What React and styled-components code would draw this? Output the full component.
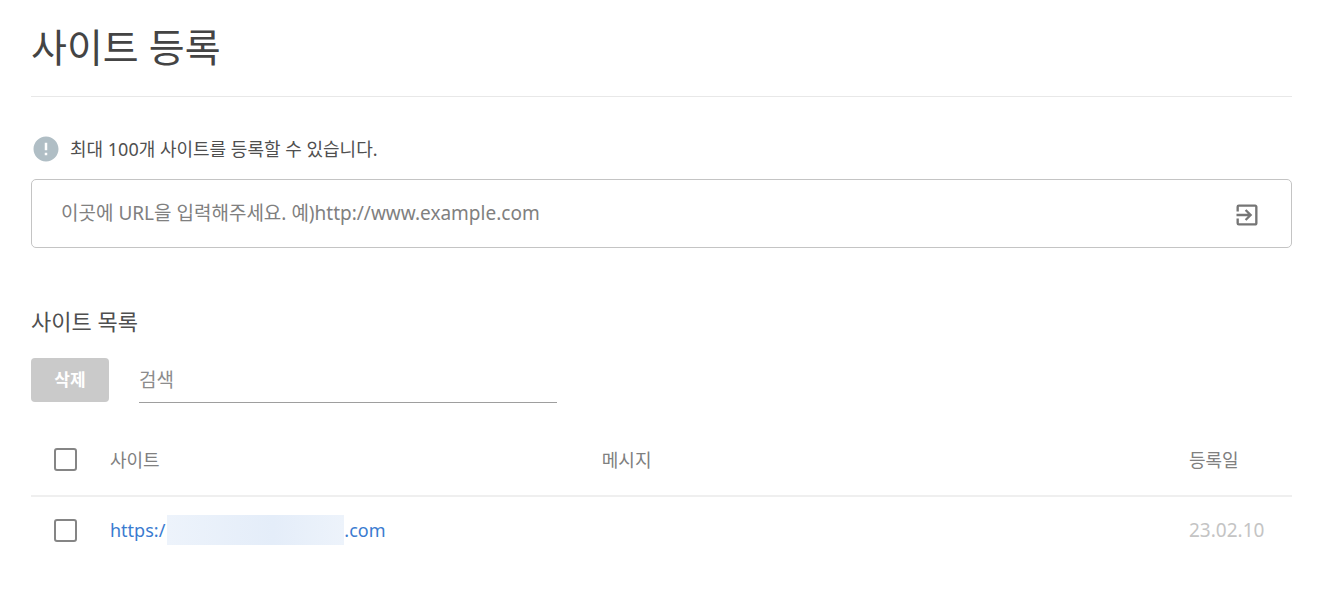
import React, { useState } from "react";
import styled, { createGlobalStyle } from "styled-components";
import { MdError, MdExitToApp } from "react-icons/md";

const sites = [
  { id: 1, prefix: "https:/", suffix: ".com", message: "", date: "23.02.10" },
];

const App = () => {
  const [url, setUrl] = useState("");
  const [keyword, setKeyword] = useState("");
  const [selected, setSelected] = useState([]);

  const allSelected = selected.length === sites.length;

  const toggleAll = () => setSelected(allSelected ? [] : sites.map((s) => s.id));

  const toggleSite = (id) =>
    setSelected(
      selected.includes(id)
        ? selected.filter((item) => item !== id)
        : [...selected, id]
    );

  return (
    <>
      <GlobalStyle />
      <Page>
        <Title>사이트 등록</Title>
        <Notice>
          <MdError />
          최대 100개 사이트를 등록할 수 있습니다.
        </Notice>
        <UrlForm onSubmit={(e) => e.preventDefault()}>
          <UrlInput
            type="text"
            aria-label="URL"
            value={url}
            onChange={(e) => setUrl(e.target.value)}
            placeholder="이곳에 URL을 입력해주세요. 예)http://www.example.com"
          />
          <SubmitBtn type="submit" aria-label="등록">
            <MdExitToApp />
          </SubmitBtn>
        </UrlForm>
        <ListTitle>사이트 목록</ListTitle>
        <Toolbar>
          <DeleteBtn type="button" disabled={!selected.length}>
            삭제
          </DeleteBtn>
          <SearchInput
            type="text"
            aria-label="검색"
            value={keyword}
            onChange={(e) => setKeyword(e.target.value)}
            placeholder="검색"
          />
        </Toolbar>
        <Table>
          <thead>
            <HeadRow>
              <CheckCell as="th">
                <Checkbox
                  type="checkbox"
                  aria-label="전체 선택"
                  checked={allSelected}
                  onChange={toggleAll}
                />
              </CheckCell>
              <HeadCell $width="39%">사이트</HeadCell>
              <HeadCell>메시지</HeadCell>
              <HeadCell $width="103px">등록일</HeadCell>
            </HeadRow>
          </thead>
          <tbody>
            {sites.map((site) => (
              <tr key={site.id}>
                <CheckCell>
                  <Checkbox
                    type="checkbox"
                    aria-label="사이트 선택"
                    checked={selected.includes(site.id)}
                    onChange={() => toggleSite(site.id)}
                  />
                </CheckCell>
                <Cell>
                  <SiteLink href="#">
                    {site.prefix}
                    <Mask />
                    {site.suffix}
                  </SiteLink>
                </Cell>
                <Cell>{site.message}</Cell>
                <DateCell>{site.date}</DateCell>
              </tr>
            ))}
          </tbody>
        </Table>
      </Page>
    </>
  );
};

const GlobalStyle = createGlobalStyle`
  * {
    box-sizing: border-box;
  }
  body {
    margin: 0;
    background: #fff;
    color: #4f4f4f;
    font-family: "Noto Sans", "Noto Sans CJK KR", sans-serif;
  }
  input,
  button {
    font-family: inherit;
  }
`;

const Page = styled.main`
  padding: 0 50px 0 31px;
`;

const Title = styled.h1`
  margin: 0;
  height: 97px;
  padding-top: 19px;
  border-bottom: 1px solid #e8e8e8;
  font-size: 39px;
  line-height: 56px;
  font-weight: 400;
  color: #444;
`;

const Notice = styled.p`
  display: flex;
  align-items: center;
  gap: 9px;
  margin: 36px 0 14px;
  font-size: 18px;
  line-height: 32px;
  svg {
    width: 30px;
    height: 30px;
    color: #b0bec5;
  }
`;

const UrlForm = styled.form`
  display: flex;
  align-items: center;
  height: 69px;
  padding: 0 30px 0 29px;
  border: 1px solid #c4c4c4;
  border-radius: 5px;
`;

const UrlInput = styled.input`
  flex: 1;
  border: none;
  outline: none;
  padding: 0 0 2px;
  font-size: 19px;
  line-height: 32px;
  background: transparent;
  &::placeholder {
    color: #808080;
    opacity: 1;
  }
`;

const SubmitBtn = styled.button`
  display: flex;
  padding: 2px 0 0;
  border: none;
  background: transparent;
  color: #757575;
  cursor: pointer;
  svg {
    width: 28px;
    height: 28px;
  }
`;

const ListTitle = styled.h2`
  margin: 57px 0 20px;
  font-size: 22px;
  line-height: 32px;
  font-weight: 400;
`;

const Toolbar = styled.div`
  display: flex;
  align-items: center;
  gap: 30px;
`;

const DeleteBtn = styled.button`
  width: 78px;
  height: 44px;
  border: none;
  border-radius: 4px;
  background: ${({ disabled }) => (disabled ? "#cacaca" : "#1976d2")};
  color: #fff;
  font-size: 17px;
  line-height: 24px;
  font-weight: 700;
`;

const SearchInput = styled.input`
  width: 418px;
  height: 46px;
  padding: 0;
  border: none;
  border-bottom: 1px solid #9e9e9e;
  outline: none;
  font-size: 19px;
  &::placeholder {
    color: #8c8c8c;
    opacity: 1;
  }
`;

const Table = styled.table`
  width: 100%;
  margin-top: 21px;
  border-collapse: collapse;
  table-layout: fixed;
`;

const HeadRow = styled.tr`
  border-bottom: 2px solid #efefef;
`;

const Cell = styled.td`
  height: 68px;
  padding: 0 0 2px;
  font-size: 18px;
  text-align: left;
`;

const HeadCell = styled.th`
  width: ${({ $width }) => $width || "auto"};
  height: 72px;
  padding: 0 0 2px;
  font-size: 18px;
  font-weight: 400;
  text-align: left;
  color: #808080;
`;

const CheckCell = styled.td`
  width: 79px;
  padding: 0 0 0 23px;
  text-align: left;
`;

const DateCell = styled(Cell)`
  font-size: 19px;
  color: #c4c4c4;
`;

const Checkbox = styled.input`
  appearance: none;
  display: block;
  width: 23px;
  height: 23px;
  margin: 0;
  border: 2px solid #858585;
  border-radius: 3px;
  &:checked {
    background: #858585;
  }
`;

const SiteLink = styled.a`
  display: flex;
  align-items: center;
  color: #3a7bd0;
  text-decoration: none;
`;

const Mask = styled.span`
  width: 177px;
  height: 30px;
  margin-left: 2px;
  background: linear-gradient(90deg, #edf3fb, #e4edf9 60%, #edf3fb);
`;

export default App;
